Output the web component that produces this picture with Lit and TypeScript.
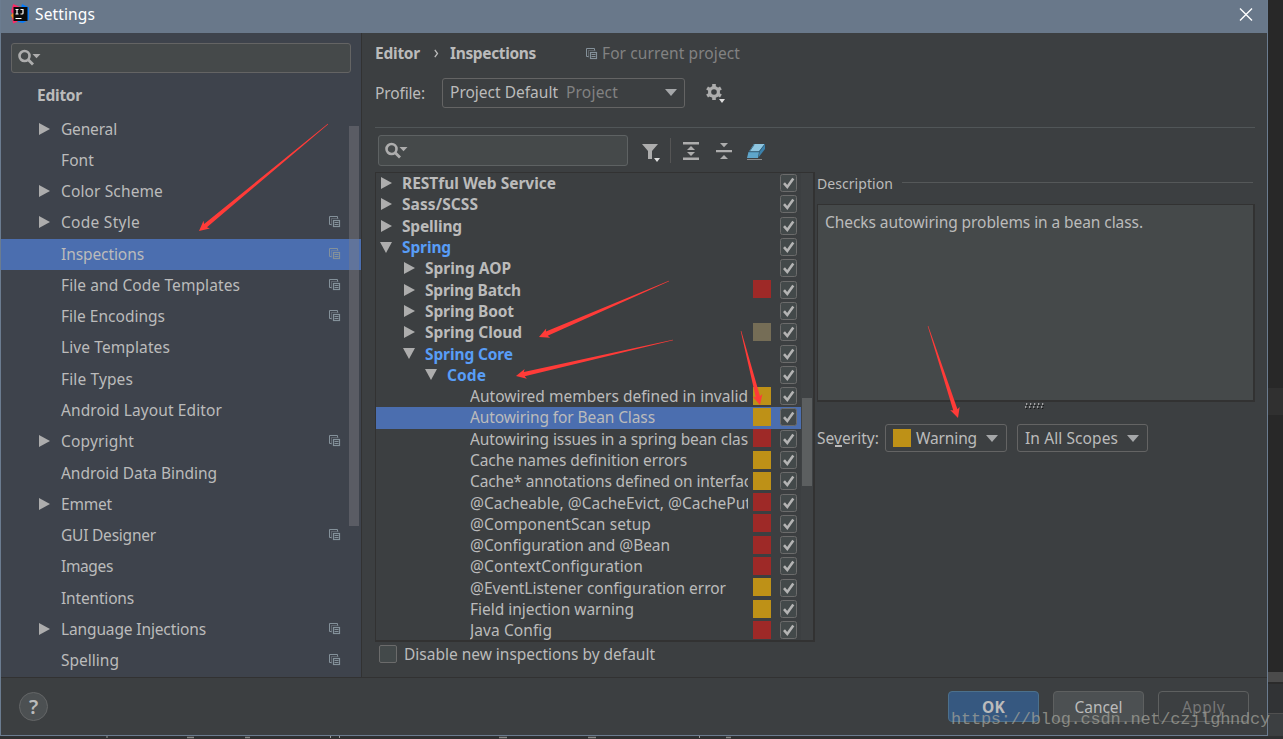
import { LitElement, html, css, svg, nothing } from "lit";
import { customElement, property } from "lit/decorators.js";
import { classMap } from "lit/directives/class-map.js";

/* A text run whose tracking is computed so that it fills a given width. */
@customElement("ui-text")
class UiText extends LitElement {
  @property({ type: Number }) w = 0;
  @property() text = "";
  static styles = css`
    :host { display: inline-block; white-space: pre; flex: none; }
    span { display: inline-block; white-space: pre; }
  `;
  render() {
    return html`<span>${this.text}</span>`;
  }
  updated() {
    const s = this.renderRoot.querySelector("span") as HTMLElement;
    s.style.letterSpacing = "0px";
    const natural = s.getBoundingClientRect().width;
    const gap = (this.w - natural) / this.text.length;
    s.style.letterSpacing = gap.toFixed(3) + "px";
  }
}

const t = (text: string, w: number) => html`<ui-text .text=${text} .w=${w}></ui-text>`;

const copyIcon = html`<svg class="copy" width="12" height="12" viewBox="0 0 12 12">
  <path d="M2.5 8.5H.5V.5H8.5V2.5" fill="none" stroke="currentColor"/>
  <path d="M2.5 9.5V2.5H9.5" fill="none" stroke="currentColor" opacity=".45"/>
  <rect x="4.500" y="4.500" width="6" height="6" fill="none" stroke="currentColor" stroke-width="1.2"/>
  <path d="M5.5 6.5H9.5M5.5 8.5H9.5" stroke="currentColor"/></svg>`;
const right = html`<svg width="11" height="12" viewBox="0 0 11 12"><path d="M0 0L11 6L0 12Z" fill="#adadad"/></svg>`;
const down = html`<svg class="down" width="12" height="11" viewBox="0 0 12 11"><path d="M0 0H12L6 11Z" fill="#adadad"/></svg>`;
const comboArrow = html`<svg class="arrow" width="12" height="7" viewBox="0 0 12 7"><path d="M0 0H12L6 7Z" fill="#a5a7a9"/></svg>`;
const magnifier = html`<svg width="24" height="18" viewBox="0 0 24 18">
  <circle cx="6.500" cy="7" r="5" fill="none" stroke="#adadad" stroke-width="2.6"/>
  <path d="M10 10.5L15 15.5" stroke="#adadad" stroke-width="2.8"/>
  <path d="M14.5 5H22.5L18.5 9.3Z" fill="#adadad"/></svg>`;
const check = html`<svg width="17" height="18" viewBox="0 0 17 18">
  <rect x=".5" y=".5" width="16" height="17" rx="2" fill="#43494a" stroke="#6b6b6b"/>
  <path d="M4 9.200L7.3 13L13.300 4.6" fill="none" stroke="#b4b4b4" stroke-width="2.6"/></svg>`;

type Nav = [string, number, boolean?, boolean?];
const nav: Nav[] = [
  ["General", 56, true], ["Font", 33], ["Color Scheme", 102, true], ["Code Style", 79, true, true],
  ["Inspections", 83, false, true], ["File and Code Templates", 179, false, true],
  ["File Encodings", 104, false, true], ["Live Templates", 109], ["File Types", 72],
  ["Android Layout Editor", 161], ["Copyright", 73, true, true], ["Android Data Binding", 156],
  ["Emmet", 51, true], ["GUI Designer", 95, false, true], ["Images", 52], ["Intentions", 73],
  ["Language Injections", 145, true, true], ["Spelling", 58, false, true],
];

/* label, width, depth, state, severity */
type Item = [string, number, number, "closed" | "open" | "leaf", string?];
const items: Item[] = [
  ["RESTful Web Service", 154, 0, "closed"], ["Sass/SCSS", 76, 0, "closed"], ["Spelling", 60, 0, "closed"],
  ["Spring", 49, 0, "open"], ["Spring AOP", 86, 1, "closed"], ["Spring Batch", 96, 1, "closed", "error"],
  ["Spring Boot", 89, 1, "closed"], ["Spring Cloud", 97, 1, "closed", "weak"], ["Spring Core", 88, 1, "open"],
  ["Code", 39, 2, "open"], ["Autowired members defined in invalid", 278, 3, "leaf", "warn"],
  ["Autowiring for Bean Class", 185, 3, "leaf", "warn"],
  ["Autowiring issues in a spring bean clas", 278, 3, "leaf", "error"],
  ["Cache names definition errors", 217, 3, "leaf", "warn"],
  ["Cache* annotations defined on interfac", 281, 3, "leaf", "warn"],
  ["@Cacheable, @CacheEvict, @CachePut", 281, 3, "leaf", "error"],
  ["@ComponentScan setup", 181, 3, "leaf", "error"], ["@Configuration and @Bean", 200, 3, "leaf", "error"],
  ["@ContextConfiguration", 173, 3, "leaf", "error"], ["@EventListener configuration error", 256, 3, "leaf", "warn"],
  ["Field injection warning", 164, 3, "leaf", "warn"], ["Java Config", 82, 3, "leaf", "error"],
];

/* Annotation arrows: tail and tip positions over the window */
const arrows = [
  [328, 124, 199, 231], [669, 281, 539, 337], [673, 340, 516, 376], [741, 331, 760, 405], [928, 326, 958, 418],
];
const arrow = ([x1, y1, x2, y2]: number[]) => {
  const l = Math.hypot(x2 - x1, y2 - y1), a = (Math.atan2(y2 - y1, x2 - x1) * 180) / Math.PI;
  return svg`<path transform="translate(${x1} ${y1}) rotate(${a})" fill="#ff3b38"
    d="M0 -.3L${l - 8.5} -2.2L${l - 10} -5L${l} 0L${l - 10} 5L${l - 8.5} 2.2L0 .3Z"/>`;
};

@customElement("app-root")
class AppRoot extends LitElement {
  static styles = css`
    :host { display: block; position: relative; width: 1283px; height: 739px; overflow: hidden; background: #2b2b2b;
      font: 15.5px/20px "Noto Sans", "Open Sans", sans-serif; color: #bbbbbb; }
    * { box-sizing: border-box; }
    svg { display: block; flex: none; }
    .desk { display: flex; height: 736px; }
    .window { width: 1268px; height: 736px; border: 1px solid #6b7c90; border-top: 0; background: #3c3f41;
      display: flex; flex-direction: column; }
    .behind { width: 15px; display: flex; flex-direction: column; background: #282828; }
    .behind .a { height: 388px; } .behind .b { height: 27px; background: #303030; }
    .behind .c { height: 257px; } .behind .d { height: 10px; background: #4b4b4b; }
    .behind .e { height: 32px; background: #313335; border-top: 2px solid #2b2b2b; border-bottom: 1px solid #505050; }
    .behind .f { flex: 1; background: #3c3f41; }
    .strip { height: 3px; background: #2f3031; }
    .title { height: 33px; flex: none; background: #69788a; display: flex; align-items: center; color: #fff;
      padding: 0 14px 5px 8px; gap: 6px; }
    .title .x { margin-left: auto; }
    .body { height: 645px; flex: none; display: flex; border-bottom: 1px solid #323232; }
    .left { width: 361px; flex: none; background: #3e434c; border-right: 1px solid #323232; padding-top: 10px;
      display: grid; grid-template-rows: 30px 41px 563px; }
    .search { border: 1px solid #646464; border-radius: 3px; background: #45494a; display: flex; align-items: center; padding: 0 6px; }
    .left .search { margin: 0 10px; }
    .left .group { font-weight: 700; padding: 12px 0 0 36px; }
    .navrow { height: 31.28px; display: flex; align-items: center; padding: 0 0 2px 38px; }
    .navrow .tw { width: 22px; flex: none; }
    .navrow .copy { margin-left: auto; margin-right: 20px; }
    .navrow.sel { background: #4b6eaf; }
    .copy { color: #84919a; }
    .nav { position: relative; }
    .navbar { position: absolute; left: 348px; top: 12px; width: 10px; height: 400px; background: rgba(125, 125, 130, .45); }
    .main { flex: 1; min-width: 0; padding: 10px 12px 0 13px; display: flex; flex-direction: column; }
    .crumb { display: flex; align-items: center; height: 20px; font-weight: 700; }
    .crumb .sep { margin: 0 11px 0 14px; }
    .crumb .copy { margin: 1px 4px 0 50px; }
    .dim { color: #828282; font-weight: 400; }
    .profile { display: flex; align-items: center; height: 30px; margin-top: 15px; }
    .combo { border: 1px solid #646464; border-radius: 3px; display: flex; align-items: center; }
    .combo .arrow { margin-left: auto; }
    .profile .combo { margin-left: 17px; width: 243px; height: 30px; padding: 0 7px 2px 7px; gap: 8px; }
    .profile .gear { margin-left: 21px; }
    .rule { height: 1px; background: #515658; margin-top: 19px; }
    .split { display: flex; margin-top: 7px; }
    .insp { width: 440px; flex: none; }
    .tools { height: 31px; display: flex; align-items: center; padding-left: 3px; }
    .tools .search { width: 250px; height: 31px; border-color: #5e6263; }
    .tools .filter { margin-left: 13px; margin-top: 2px; }
    .tools .bar { width: 1px; height: 25px; background: #555; margin: 0 12px 0 9px; }
    .tools .col { margin-left: 17px; } .tools .era { margin-left: 14px; margin-top: 2px; }
    .tree { margin-top: 6px; width: 440px; height: 470px; border: 1px solid #323232; border-right-width: 2px; border-bottom-width: 2px; display: flex; overflow: hidden; }
    .rows { width: 425px; flex: none; }
    .row { height: 21.3px; display: flex; align-items: center; padding-right: 4px; }
    .row.sel { background: #4b6eaf; }
    .row .tw { width: 21px; flex: none; }
    .row .down { margin-left: -1px; }
    .d0 { padding-left: 5px; } .d1 { padding-left: 28px; } .d2 { padding-left: 50px; } .d3 { padding-left: 73px; }
    .d0, .d1, .d2 { font-weight: 700; }
    .row.open { color: #589df6; }
    .label { flex: 1; overflow: hidden; display: flex; height: 21px; }
    .sev { width: 18px; height: 18px; margin: 0 9px 2px 5px; flex: none; }
    .error { background: #9e2927; } .warn { background: #be9117; } .weak { background: #756d56; }
    .row svg { margin-bottom: 1px; }
    .gutter { flex: 1; padding: 225px 1px 0; background: #3f4244; }
    .thumb { width: 10px; height: 88px; background: #5c5f60; }
    .disable { display: flex; align-items: center; gap: 7px; height: 23px; padding-left: 4px; }
    .box { width: 18px; height: 18px; border: 1px solid #6b6b6b; border-radius: 2px; background: #43494a; }
    .side { flex: 1; padding: 39px 0 0 2px; min-width: 0; }
    .dhead { display: flex; align-items: center; height: 20px; font-size: 14px; gap: 9px; }
    .dhead i { flex: 1; height: 1px; background: #555859; margin: 0 2px 4px 0; }
    .desc { height: 198px; margin-top: 10px; background: #45494a; border: 1px solid #323232; border-right-width: 2px; border-bottom-width: 2px; padding: 7px 7px; }
    .grip { margin: 1px 0 0 208px; }
    .sevline { display: flex; align-items: center; height: 28px; margin-top: 15px; }
    .sevline .combo { height: 28px; padding: 0 8px 0 7px; }
    .sevline .one { width: 122px; margin-left: 6px; gap: 5px; }
    .sevline .two { width: 131px; margin-left: 10px; }
    .swatch { width: 18px; height: 18px; background: #be9117; }
    .under { display: grid; }
    .under > * { grid-area: 1 / 1; }
    .under i { width: 7px; height: 2px; background: #bbb; align-self: end; margin: 0 0 1px 18px; }
    .foot { flex: 1; display: flex; align-items: flex-start; padding: 13px 18px 0 18px; gap: 14px; }
    .help { width: 29px; height: 29px; border-radius: 50%; border: 1px solid #646667; background: #4c5052; display: grid; place-items: center;
      font-weight: 600; font-size: 20px; margin: 1px auto 0 0; }
    .btn { width: 91px; height: 31px; border: 1px solid #5e6060; border-radius: 4px; background: #4c5052; display: grid; place-items: center; }
    .btn.ok { background: #365880; border-color: #4c708c; font-weight: 700; }
    .btn.off { background: none; color: #777; }
    .over { position: absolute; left: 0; top: 0; }
    .mark { position: absolute; left: 951px; top: 710px; font: 17px/20px "Liberation Mono", monospace; color: rgba(160, 160, 152, .75); }
  `;

  render() {
    return html`
      <div class="desk">
        <div class="window">
          <div class="title">
            <svg width="20" height="20" viewBox="0 0 20 20">
              <path d="M4 0L11 3L8 18L4 19.500L3 14Z" fill="#fc2b67"/><path d="M2 11.500L5 7V16Z" fill="#f68b1f"/><path d="M4 1L9 4L5 10L2 8Z" fill="#fc2b67"/>
              <path d="M13 0L20 3.500V15.500L14 19L9 18Z" fill="#087cfa"/><rect x="4.5" y="3" width="14" height="14" fill="#0b0b0b"/>
              <path d="M6.500 5.5H9.500M8 5.5V10M6.500 10H9.500M11.500 5.5H14V9.2Q14 10 13 10H11.500M6.500 14.5H12.500" fill="none" stroke="#fff" stroke-width="1.2"/>
            </svg>${t("Settings", 60)}
            <svg class="x" width="14" height="13" viewBox="0 0 14 13"><path d="M1 .5L13 12.5M13 .5L1 12.5" stroke="#fff" stroke-width="1.4"/></svg>
          </div>
          <div class="body">
            <div class="left">
              <div class="search">${magnifier}</div>
              <div class="group">${t("Editor", 45)}</div>
              <div class="nav">
                ${nav.map(([label, w, tw, copy], i) => html`<div class=${classMap({ navrow: true, sel: i === 4 })}>
                  <span class="tw">${tw ? right : nothing}</span>${t(label, w)}${copy ? copyIcon : nothing}</div>`)}
                <div class="navbar"></div>
              </div>
            </div>
            <div class="main">
              <div class="crumb">${t("Editor", 45)}
                <svg class="sep" width="5" height="9" viewBox="0 0 5 9"><path d="M.8 .8L3.5 4.5L.8 8.2" fill="none" stroke="#bbb" stroke-width="1.3"/></svg>
                ${t("Inspections", 86)}${copyIcon}<span class="dim">${t("For current project", 138)}</span></div>
              <div class="profile">${t("Profile:", 50)}
                <div class="combo">${t("Project Default", 108)}<span class="dim">${t("Project", 52)}</span>${comboArrow}</div>
                <svg class="gear" width="20" height="20" viewBox="0 0 20 20">
                  <g fill="#adadad"><rect x="6.2" y="1" width="3.6" height="16"/><rect x="6.2" y="1" width="3.6" height="16" transform="rotate(60 8 9)"/>
                  <rect x="6.2" y="1" width="3.6" height="16" transform="rotate(120 8 9)"/><circle cx="8" cy="9" r="6"/></g>
                  <circle cx="8" cy="9" r="2.8" fill="#3c3f41"/><path d="M12 15.5H20L16 20Z" fill="#3c3f41"/><path d="M13 16H19L16 20Z" fill="#ddd"/></svg>
              </div>
              <div class="rule"></div>
              <div class="split">
                <div class="insp">
                  <div class="tools">
                    <div class="search">${magnifier}</div>
                    <svg class="filter" width="20" height="20" viewBox="0 0 20 20"><path d="M1 2H17L11 9V17H7V9Z" fill="#adadad"/><path d="M13 16H19L16 20Z" fill="#ddd"/></svg>
                    <span class="bar"></span>
                    <svg width="16" height="18" viewBox="0 0 16 18"><path d="M0 0H16V2.4H0ZM0 15.6H16V18H0ZM8 4L12 8H4ZM4 10H12L8 14Z" fill="#adadad"/></svg>
                    <svg class="col" width="16" height="18" viewBox="0 0 16 18"><path d="M0 8H16V10.2H0ZM4 1H12L8 5.2ZM8 13L12 17H4Z" fill="#adadad"/></svg>
                    <svg class="era" width="20" height="18" viewBox="0 0 20 18"><path d="M8 1H19L13 8.5H3Z" fill="#8ec5df"/>
                      <path d="M2.5 9H13L12 15H1Z" fill="#5fa6cb"/><path d="M19 1V6L12.5 14.5L13.5 8.5Z" fill="#3b81ab"/><path d="M3 9L8.3 1.5M3 8.8H13L19 1" fill="none" stroke="#285d7c" stroke-width=".8"/><path d="M1 16.5H16" stroke="#8a8c8d"/></svg>
                  </div>
                  <div class="tree">
                    <div class="rows">${items.map(([label, w, d, state, sev], i) => html`
                      <div class=${classMap({ row: true, ["d" + d]: true, open: state === "open", sel: i === 11 })}>
                        <span class="tw">${state === "closed" ? right : state === "open" ? down : nothing}</span>
                        <span class="label">${t(label, w)}</span>
                        <span class=${classMap({ sev: true, [sev ?? "none"]: true })}></span>${check}
                      </div>`)}</div>
                    <div class="gutter"><div class="thumb"></div></div>
                  </div>
                  <div class="disable"><span class="box"></span>${t("Disable new inspections by default", 251)}</div>
                </div>
                <div class="side">
                  <div class="dhead">${t("Description", 76)}<i></i></div>
                  <div class="desc">${t("Checks autowiring problems in a bean class.", 318)}</div>
                  <svg class="grip" width="19" height="6" viewBox="0 0 19 6">${[0, 1, 2, 3, 4].map((i) => svg`
                    <path d="M${i * 4 + 1} 1h1.3M${i * 4} 4h1.3" stroke="#c5c5c5" stroke-width="1.3"/><path d="M${i * 4 + 2} 2.4h1.3M${i * 4 + 1} 5.4h1.3" stroke="#111"/>`)}</svg>
                  <div class="sevline"><span class="under">${t("Severity:", 62)}<i></i></span>
                    <div class="combo one"><span class="swatch"></span>${t("Warning", 61)}${comboArrow}</div>
                    <div class="combo two">${t("In All Scopes", 93)}${comboArrow}</div></div>
                </div>
              </div>
            </div>
          </div>
          <div class="foot"><div class="help">?</div><div class="btn ok">${t("OK", 23)}</div>
            <div class="btn">${t("Cancel", 48)}</div><div class="btn off">${t("Apply", 43)}</div></div>
        </div>
        <div class="behind"><div class="a"></div><div class="b"></div><div class="c"></div><div class="d"></div><div class="e"></div><div class="f"></div></div>
      </div>
      <div class="strip"><svg width="800" height="3" viewBox="0 0 800 3">
        <path d="M107 0V2M330.500 0V2M339.500 0V2M699.500 0V2" stroke="#999"/>
        <path d="M187 1.500H194M499 1.500H507M588 1.500H596M245 1.500H250M726 1.500H731" stroke="#888" stroke-width="1.500"/></svg></div>
      <svg class="over" width="1283" height="739" viewBox="0 0 1283 739">${arrows.map(arrow)}</svg>
      <div class="mark">${t("https://blog.csdn.net/czjlghndcy", 319)}</div>`;
  }
}
